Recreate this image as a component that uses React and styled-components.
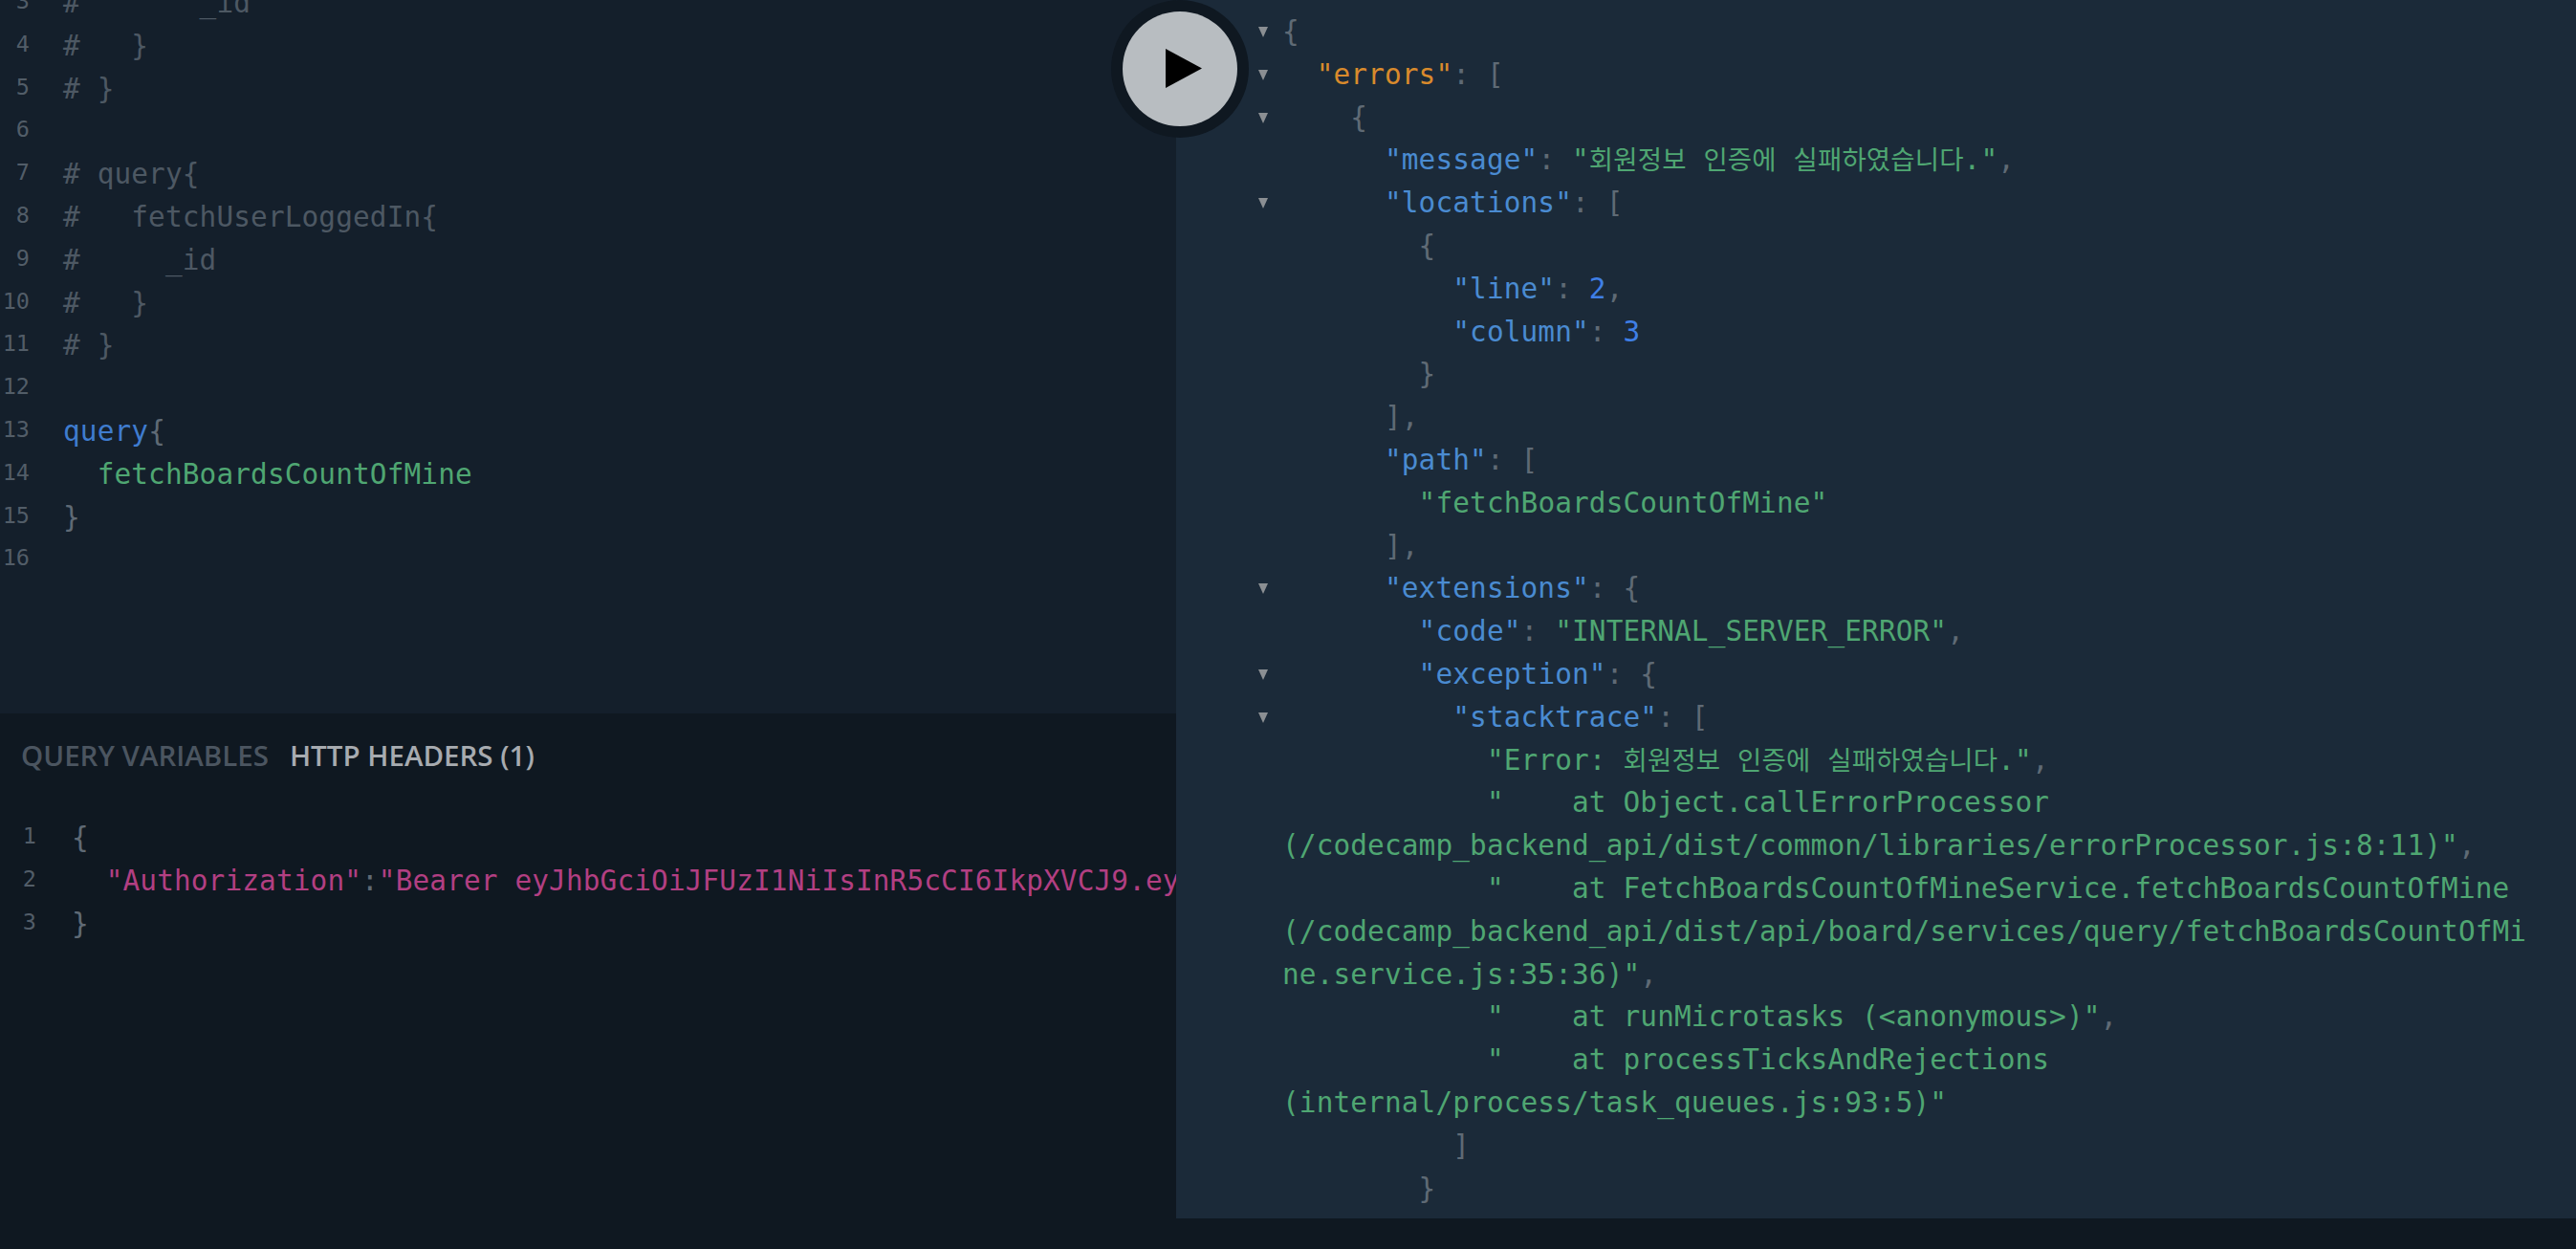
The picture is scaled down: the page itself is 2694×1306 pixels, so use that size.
import styled, { createGlobalStyle } from 'styled-components';

const GlobalStyle = createGlobalStyle`
  html, body {
    margin: 0;
    padding: 0;
    background: #0f1821;
  }
`;

const MONO = `"DejaVu Sans Mono", "Noto Sans CJK KR", monospace`;

const colors = {
  c: '#4d5863',
  p: '#5f6a75',
  k: '#3f7ccf',
  f: '#4fa672',
  a: '#4a8bd1',
  o: '#d98a2c',
  n: '#3f7fe6',
  s: '#4fa672',
  h: '#b23f82',
};

const Page = styled.div`
  position: relative;
  display: flex;
  width: 2694px;
  height: 1306px;
  overflow: hidden;
  background: #0f1821;
`;

const LeftColumn = styled.div`
  display: flex;
  flex-direction: column;
  width: 1230px;
  height: 100%;
  overflow: hidden;
`;

const QueryEditor = styled.div`
  flex: none;
  height: 746px;
  background: #141f2b;
  overflow: hidden;
`;

const Scrolled = styled.div`
  margin-top: -19px;
`;

const BottomPane = styled.div`
  flex: 1;
  background: #0f1821;
`;

const Tabs = styled.div`
  display: flex;
  gap: 22px;
  padding-left: 22px;
  height: 86px;
  align-items: center;
`;

const Tab = styled.span`
  font-family: "Open Sans", sans-serif;
  font-size: 29.5px;
  font-weight: 600;
  text-transform: uppercase;
  color: ${({ $active }) => ($active ? '#a7abb0' : '#4b5560')};
`;

const HeadersEditor = styled.div`
  padding-top: 22px;
`;

const Line = styled.div`
  display: flex;
  height: 44.8px;
  line-height: 44.8px;
  white-space: pre;
`;

const Num = styled.span`
  flex: none;
  width: ${({ $w }) => $w}px;
  margin-right: ${({ $gap }) => $gap}px;
  text-align: right;
  font-family: ${MONO};
  font-size: 23.5px;
  line-height: 41px;
  color: #525d68;
`;

const Code = styled.span`
  font-family: ${MONO};
  font-size: 29.4px;
  letter-spacing: 0.13px;
  color: #5f6a75;
`;

const Tok = styled.span`
  color: ${({ $t }) => colors[$t]};
`;

const Hangul = styled.span`
  font-size: 27.5px;
`;

const ResultPane = styled.div`
  width: 1464px;
  height: 1274px;
  background: #1b2a39;
  overflow: hidden;
  padding-top: 11px;
  box-sizing: border-box;
`;

const ResultLine = styled.div`
  display: flex;
  line-height: 44.8px;
`;

const Gutter = styled.div`
  flex: none;
  width: 111px;
  display: flex;
  justify-content: flex-end;
  padding: 17px 15px 0 0;
  box-sizing: border-box;
`;

const Fold = styled.i`
  display: block;
  width: 0;
  height: 0;
  border-left: 5px solid transparent;
  border-right: 5px solid transparent;
  border-top: 11px solid #8b8f93;
`;

const ResultCode = styled.div`
  width: 1302px;
  font-family: ${MONO};
  font-size: 29.4px;
  letter-spacing: 0.13px;
  color: #5f6a75;
  white-space: pre-wrap;
  overflow-wrap: break-word;
`;

const RunRing = styled.div`
  position: absolute;
  left: 1162px;
  top: 0;
  width: 144px;
  height: 144px;
  border-radius: 50%;
  background: #0f1821;
  display: flex;
  align-items: center;
  justify-content: center;
`;

const RunButton = styled.button`
  width: 120px;
  height: 120px;
  padding: 0;
  border: 0;
  border-radius: 50%;
  background: #b8bdc1;
  display: flex;
  align-items: center;
  justify-content: center;
`;

const PlayIcon = styled.svg`
  margin-left: 8px;
  margin-top: -2px;
`;

const query = [
  [['c', '#       _id']],
  [['c', '#   }']],
  [['c', '# }']],
  [],
  [['c', '# query{']],
  [['c', '#   fetchUserLoggedIn{']],
  [['c', '#     _id']],
  [['c', '#   }']],
  [['c', '# }']],
  [],
  [['k', 'query'], ['p', '{']],
  [['f', '  fetchBoardsCountOfMine']],
  [['p', '}']],
  [],
];

const TOKEN = 'eyJhbGciOiJFUzI1NiIsInR5cCI6IkpXVCJ9.eyJlbWFpbCI6';

// [has fold arrow, tokens]
const result = [
  [1, [['p', '{']]],
  [1, [['o', '  "errors"'], ['p', ': [']]],
  [1, [['p', '    {']]],
  [0, [['a', '      "message"'], ['p', ': '], ['s', '"'], ['K', '회원정보'], ['s', ' '], ['K', '인증에'], ['s', ' '], ['K', '실패하였습니다'], ['s', '."'], ['p', ',']]],
  [1, [['a', '      "locations"'], ['p', ': [']]],
  [0, [['p', '        {']]],
  [0, [['a', '          "line"'], ['p', ': '], ['n', '2'], ['p', ',']]],
  [0, [['a', '          "column"'], ['p', ': '], ['n', '3']]],
  [0, [['p', '        }']]],
  [0, [['p', '      ],']]],
  [0, [['a', '      "path"'], ['p', ': [']]],
  [0, [['s', '        "fetchBoardsCountOfMine"']]],
  [0, [['p', '      ],']]],
  [1, [['a', '      "extensions"'], ['p', ': {']]],
  [0, [['a', '        "code"'], ['p', ': '], ['s', '"INTERNAL_SERVER_ERROR"'], ['p', ',']]],
  [1, [['a', '        "exception"'], ['p', ': {']]],
  [1, [['a', '          "stacktrace"'], ['p', ': [']]],
  [0, [['s', '            "Error: '], ['K', '회원정보'], ['s', ' '], ['K', '인증에'], ['s', ' '], ['K', '실패하였습니다'], ['s', '."'], ['p', ',']]],
  [0, [['s', '            "    at Object.callErrorProcessor (/codecamp_backend_api/dist/common/libraries/errorProcessor.js:8:11)"'], ['p', ',']]],
  [0, [['s', '            "    at FetchBoardsCountOfMineService.fetchBoardsCountOfMine (/codecamp_backend_api/dist/api/board/services/query/fetchBoardsCountOfMine.service.js:35:36)"'], ['p', ',']]],
  [0, [['s', '            "    at runMicrotasks (<anonymous>)"'], ['p', ',']]],
  [0, [['s', '            "    at processTicksAndRejections (internal/process/task_queues.js:93:5)"']]],
  [0, [['p', '          ]']]],
  [0, [['p', '        }']]],
];

const renderTokens = (tokens) =>
  tokens.map(([t, text], i) =>
    t === 'K' ? (
      <Tok key={i} $t="s"><Hangul>{text}</Hangul></Tok>
    ) : (
      <Tok key={i} $t={t}>{text}</Tok>
    )
  );

export default function App() {
  return (
    <Page>
      <GlobalStyle />
      <LeftColumn>
        <QueryEditor>
          <Scrolled>
            {query.map((tokens, i) => (
              <Line key={i}>
                <Num $w={31} $gap={35}>{i + 3}</Num>
                <Code>{renderTokens(tokens)}</Code>
              </Line>
            ))}
          </Scrolled>
        </QueryEditor>
        <BottomPane>
          <Tabs>
            <Tab>Query Variables</Tab>
            <Tab $active>HTTP Headers (1)</Tab>
          </Tabs>
          <HeadersEditor>
            <Line>
              <Num $w={38} $gap={37}>1</Num>
              <Code>{'{'}</Code>
            </Line>
            <Line>
              <Num $w={38} $gap={37}>2</Num>
              <Code>
                {'  '}
                <Tok $t="h">"Authorization"</Tok>
                <Tok $t="p">:</Tok>
                <Tok $t="h">"Bearer {TOKEN}"</Tok>
              </Code>
            </Line>
            <Line>
              <Num $w={38} $gap={37}>3</Num>
              <Code>{'}'}</Code>
            </Line>
          </HeadersEditor>
        </BottomPane>
      </LeftColumn>
      <ResultPane>
        {result.map(([fold, tokens], i) => (
          <ResultLine key={i}>
            <Gutter>{fold ? <Fold /> : null}</Gutter>
            <ResultCode>{renderTokens(tokens)}</ResultCode>
          </ResultLine>
        ))}
      </ResultPane>
      <RunRing>
        <RunButton>
          <PlayIcon width="38" height="41" viewBox="0 0 38 41">
            <path d="M0 0 L38 20.5 L0 41 Z" fill="#000" />
          </PlayIcon>
        </RunButton>
      </RunRing>
    </Page>
  );
}
